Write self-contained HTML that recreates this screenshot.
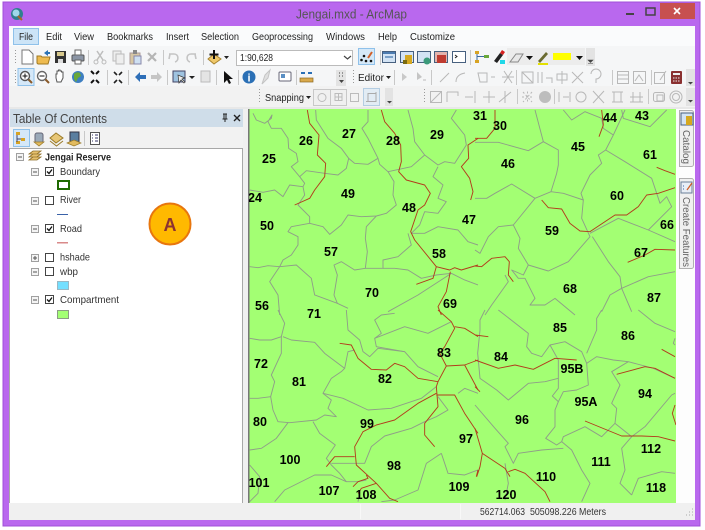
<!DOCTYPE html>
<html><head><meta charset="utf-8"><title>Jengai.mxd - ArcMap</title>
<style>
html,body{margin:0;padding:0;background:#fff;width:705px;height:530px;overflow:hidden}
svg{display:block;font-family:"Liberation Sans",sans-serif;filter:blur(.3px)}
.m{font-size:10.500px;fill:#222}
.g polyline{fill:none;stroke:#8f9e88;stroke-width:2.800;stroke-linejoin:round}
.r polyline{fill:none;stroke:#b23c1c;stroke-width:2.800;stroke-linejoin:round}
.l text{font-size:12.500px;font-weight:bold;fill:#000;text-anchor:middle}
.t{font-size:10.500px;fill:#333}
.d{fill:none;stroke:#b8b8b8;stroke-width:1}
.sep{stroke:#c8c8c8;stroke-width:1}
</style></head><body>
<svg width="705" height="530" viewBox="0 0 705 530">
<defs><clipPath id="mc"><rect x="249" y="109" width="427" height="393"/></clipPath></defs>
<rect x="3" y="2" width="697" height="524" fill="#b968ee" stroke="#a050d8"/>
<circle cx="17" cy="14" r="6" fill="#2f7f8f"/><circle cx="16" cy="13" r="3.500" fill="#9fd8ea"/><path d="M18 16l4 4" stroke="#a5682a" stroke-width="2"/>
<text x="296" y="18.500" font-size="13" fill="#555" textLength="111" lengthAdjust="spacingAndGlyphs">Jengai.mxd - ArcMap</text>
<rect x="626" y="13" width="8" height="2" fill="#444"/>
<rect x="646" y="8" width="9" height="7" fill="none" stroke="#444" stroke-width="1.500"/>
<rect x="660" y="3" width="35" height="16" fill="#c75050"/>
<path d="M674 8l6 6M680 8l-6 6" stroke="#fff" stroke-width="1.600"/>

<rect x="9" y="26" width="686" height="494" fill="#f5f6f7"/>
<rect x="9" y="26" width="686" height="20" fill="#fafbfc"/>
<rect x="9" y="86" width="686" height="23" fill="#f2f2f2"/>
<!-- menu -->
<rect x="13.500" y="28.500" width="25" height="16" fill="#cce4f7" stroke="#8fc1ea"/>
<text class="m" x="19" y="40" textLength="14" lengthAdjust="spacingAndGlyphs">File</text>
<text class="m" x="46" y="40" textLength="16" lengthAdjust="spacingAndGlyphs">Edit</text>
<text class="m" x="74" y="40" textLength="20" lengthAdjust="spacingAndGlyphs">View</text>
<text class="m" x="107" y="40" textLength="46" lengthAdjust="spacingAndGlyphs">Bookmarks</text>
<text class="m" x="166" y="40" textLength="23" lengthAdjust="spacingAndGlyphs">Insert</text>
<text class="m" x="201" y="40" textLength="38" lengthAdjust="spacingAndGlyphs">Selection</text>
<text class="m" x="252" y="40" textLength="61" lengthAdjust="spacingAndGlyphs">Geoprocessing</text>
<text class="m" x="326" y="40" textLength="39" lengthAdjust="spacingAndGlyphs">Windows</text>
<text class="m" x="378" y="40" textLength="19" lengthAdjust="spacingAndGlyphs">Help</text>
<text class="m" x="410" y="40" textLength="45" lengthAdjust="spacingAndGlyphs">Customize</text>

<!-- row 1 -->
<path d="M15.500 50v15M15.500 70v14" stroke="#999" stroke-width="1" stroke-dasharray="1 2"/>
<path d="M22 50h7l4 4v10H22z" fill="#fff" stroke="#777"/>
<path d="M37 63v-7h4l1 1h8l-2 7H38z" fill="#eebb50" stroke="#a07820"/><path d="M44 53l4-3v2h2v2h-2v2z" fill="#2a72b5"/>
<rect x="55" y="51" width="11" height="12" fill="#333"/><rect x="57" y="52" width="7" height="4" fill="#d8c98c"/><rect x="58" y="59" width="5" height="4" fill="#ddd"/>
<rect x="72" y="55" width="12" height="6" rx="1" fill="#8b95a5" stroke="#555"/><rect x="75" y="50" width="6" height="5" fill="#fff" stroke="#666"/><rect x="75" y="60" width="6" height="4" fill="#fff" stroke="#666"/>
<line class="sep" x1="88.500" y1="50" x2="88.500" y2="65"/>
<path d="M97 51l6 9M103 51l-6 9" stroke="#bdbdbd" stroke-width="1.500"/><circle cx="96" cy="62" r="2" fill="none" stroke="#bbb"/><circle cx="104" cy="62" r="2" fill="none" stroke="#bbb"/>
<rect x="113" y="51" width="8" height="10" fill="#eee" stroke="#bbb"/><rect x="116" y="54" width="8" height="10" fill="#eee" stroke="#bbb"/>
<rect x="130" y="53" width="10" height="11" fill="#d7c7a4" stroke="#a99"/><rect x="134" y="56" width="7" height="8" fill="#cfe0f2" stroke="#88a"/><rect x="133" y="50" width="4" height="4" fill="#888"/>
<path d="M148 53l8 8M156 53l-8 8" stroke="#b5b5b5" stroke-width="2.200"/>
<line class="sep" x1="163.500" y1="50" x2="163.500" y2="65"/>
<path d="M170 54l-1 5M169 54h5c5 0 5 7 1 8" fill="none" stroke="#c4c4c4" stroke-width="1.600"/>
<path d="M195 54l1 5M196 54h-5c-5 0-5 7-1 8" fill="none" stroke="#c4c4c4" stroke-width="1.600"/>
<line class="sep" x1="203.500" y1="50" x2="203.500" y2="65"/>
<path d="M208 59l6-5 7 5-7 5z" fill="#efc86a" stroke="#a88430"/><path d="M214 50v9M209.500 54.500h9" stroke="#111" stroke-width="2"/>
<path d="M224 56h5l-2.500 3z" fill="#222"/>
<rect x="236.500" y="50.500" width="116" height="15" fill="#fff" stroke="#bbb"/>
<text x="240" y="61" font-size="10.500" fill="#222" textLength="33" lengthAdjust="spacingAndGlyphs">1:90,628</text>
<path d="M344 56l3.500 3 3.500-3" fill="none" stroke="#444" stroke-width="1.200"/>
<rect x="358.500" y="48.500" width="16" height="16" fill="#d5e8f8" stroke="#8fc1ea"/>
<path d="M368 58l4-6" stroke="#d0602a" stroke-width="2"/><circle cx="361.500" cy="60" r="1.300" fill="#111"/><circle cx="366" cy="61" r="1.300" fill="#111"/><circle cx="371" cy="61" r="1.300" fill="#111"/><circle cx="364" cy="56" r="1.300" fill="#111"/>
<line class="sep" x1="380.500" y1="50" x2="380.500" y2="65"/>
<rect x="382.500" y="51.500" width="13" height="11" fill="#d3e3f4" stroke="#47607f"/><rect x="383" y="52" width="12" height="2" fill="#4d7cb0"/><rect x="385" y="56" width="8" height="2" fill="#7aa0c8"/>
<rect x="400.500" y="51.500" width="13" height="11" fill="#d3e3f4" stroke="#47607f"/><rect x="405" y="55" width="7" height="9" fill="#d6a81f"/><rect x="403" y="60" width="4" height="4" fill="#7a6a10"/>
<rect x="417.500" y="51.500" width="13" height="11" fill="#d3e3f4" stroke="#47607f"/><circle cx="427" cy="61" r="3.500" fill="#3b9a7a"/>
<rect x="434.500" y="51.500" width="13" height="11" fill="#e3b3ad" stroke="#47607f"/><rect x="437" y="55" width="9" height="8" fill="#bf3b30"/>
<rect x="452.500" y="51.500" width="13" height="11" fill="#fff" stroke="#47607f"/><path d="M455 55l2 1.500-2 1.500" stroke="#222" fill="none"/>
<line class="sep" x1="470.500" y1="50" x2="470.500" y2="65"/>
<rect x="475" y="51" width="4" height="3" fill="#d7a323"/><rect x="475" y="60" width="4" height="3" fill="#d7a323"/><rect x="484" y="55" width="5" height="3" fill="#6aa83a"/><path d="M477 54v6M477 56.500h7" stroke="#3a6aa0"/>
<path d="M494 61l6-8 3 2-6 8z" fill="#222"/><path d="M500 53l2-3 3 2-2 3z" fill="#d52020"/><rect x="500" y="60" width="5" height="4" fill="#20d8e8"/>
<rect x="507" y="48" width="78" height="17" fill="#ececec"/>
<path d="M510 62l6-8h7l-5 8z" fill="#e8e8e8" stroke="#888"/>
<path d="M526 56h7l-3.500 4z" fill="#111"/>
<path d="M538 61l8-9 2 2-8 9z" fill="#6a6a30"/><rect x="538" y="63" width="10" height="2" fill="#e3e000"/>
<rect x="553" y="53" width="18" height="7" fill="#ffff00"/>
<path d="M576 56h7l-3.500 4z" fill="#111"/>
<rect x="586" y="48" width="9" height="18" fill="#e3e3e3"/><path d="M588 60h5l-2.500 2.500zM588 63.500h5" fill="#444" stroke="#444" stroke-width=".6"/>

<!-- row 2 -->
<rect x="18" y="68.500" width="16" height="17" fill="#d5e8f8" stroke="#8fc1ea"/>
<circle cx="25" cy="76" r="4.500" fill="#fff" stroke="#555" stroke-width="1.400"/><path d="M22.500 76h5M25 73.500v5" stroke="#111"/><path d="M28.500 79.500l3.500 3.500" stroke="#8a5a2a" stroke-width="2"/>
<circle cx="42" cy="76" r="4.500" fill="#fff" stroke="#666" stroke-width="1.400"/><path d="M39.500 76h5" stroke="#111"/><path d="M45.500 79.500l3.500 3.500" stroke="#8a5a2a" stroke-width="2"/>
<path d="M56 78v-4l1 0v-3h1.500v-1h1.500v1h1.500v1h1.500v6l-2 4h-4z" fill="#fff" stroke="#555"/>
<circle cx="78" cy="77" r="6" fill="#3e7fc1"/><path d="M74 74c2-2 4-2 6-1l1 3-3 2-2 4-2-3z" fill="#6aa83a"/>
<path d="M91 71l3 3M99 71l-3 3M91 83l3-3M99 83l-3-3" stroke="#111" stroke-width="2"/>
<line class="sep" x1="107.500" y1="70" x2="107.500" y2="85"/>
<path d="M114 72l3 3M122 72l-3 3M114 83l3-3M122 83l-3-3" stroke="#222" stroke-width="1.600"/>
<line class="sep" x1="128.500" y1="70" x2="128.500" y2="85"/>
<path d="M135 77l5-5v3h6v4h-6v3z" fill="#2e6fb8"/>
<path d="M162 77l-5-5v3h-6v4h6v3z" fill="#c5c5c5"/>
<line class="sep" x1="167.500" y1="70" x2="167.500" y2="85"/>
<rect x="173" y="71" width="12" height="11" fill="#9fc3e0" stroke="#446"/><path d="M178 75l1 8 2-3 3 3 1-1-3-3 3-1z" fill="#eee" stroke="#333" stroke-width=".7"/>
<path d="M189 76h6l-3 3z" fill="#222"/>
<rect x="201" y="71" width="9" height="11" fill="#e4e4e4" stroke="#bbb"/>
<line class="sep" x1="216.500" y1="70" x2="216.500" y2="85"/>
<path d="M224 71v12l3-3 2 4 2-1-2-4h4z" fill="#111"/>
<line class="sep" x1="238.500" y1="70" x2="238.500" y2="85"/>
<circle cx="249" cy="77" r="6.500" fill="#2a6fb5"/><text x="249" y="81.500" font-size="11" font-weight="bold" fill="#fff" text-anchor="middle">i</text>
<path d="M262 84l3-9 5-5-2 8z" fill="#e0e0e0" stroke="#c4c4c4"/>
<rect x="279" y="72" width="12" height="9" rx="1" fill="#fff" stroke="#667"/><rect x="281" y="74" width="4" height="4" fill="#5a8fc4"/>
<line class="sep" x1="296.500" y1="70" x2="296.500" y2="85"/>
<path d="M301 73h4M308 73h4" stroke="#2a6fb5" stroke-width="2"/><rect x="300" y="78" width="13" height="4" fill="#d9a94c" stroke="#8b6a22" stroke-width=".7"/>
<rect x="336" y="70" width="10" height="16" fill="#e3e3e3"/><path d="M339 73h1M342 73h1M339 76h1M342 76h1" stroke="#444"/><path d="M339 80h5l-2.500 3z" fill="#444"/>
<path d="M353.500 70v15" stroke="#999" stroke-dasharray="1 2"/>
<text class="m" x="358" y="81" textLength="26" lengthAdjust="spacingAndGlyphs">Editor</text><path d="M386 76h5l-2.500 3z" fill="#222"/>
<line class="sep" x1="394.500" y1="70" x2="394.500" y2="85"/>
<path d="M402 73l5 4-5 4z" fill="#c9c9c9"/><path d="M417 72l5 5-5 3z" fill="#c4c4c4"/><path d="M423 80h3" stroke="#bbb"/>
<line class="sep" x1="431.500" y1="70" x2="431.500" y2="85"/>
<g class="d"><path d="M440 82l9-9M456 82c0-5 3-8 9-9"/><path d="M478 73h9v9h-7zM491 77h4"/><path d="M504 71l8 12M512 71l-8 12M502 77h12"/></g>
<line class="sep" x1="516.500" y1="70" x2="516.500" y2="85"/>
<g class="d"><path d="M522 72h11v11h-11zM522 72l11 11"/><path d="M538 72v11M542 72v11M546 78h6v5"/><path d="M557 74h10v6h-10zM562 71v13"/><path d="M572 72l11 11M583 72l-11 11"/><path d="M591 74a5 5 0 1 1 5 5v4"/></g>
<line class="sep" x1="612.500" y1="70" x2="612.500" y2="85"/>
<g class="d"><rect x="617.500" y="71.500" width="11" height="12"/><path d="M617 75h12M617 79h12"/><rect x="633.500" y="71.500" width="12" height="12"/><path d="M635 81l4-6 4 6"/></g>
<line class="sep" x1="651.500" y1="70" x2="651.500" y2="85"/>
<g class="d"><rect x="654.500" y="72.500" width="10" height="11"/><path d="M660 80l6-9"/></g>
<rect x="671" y="71" width="11" height="13" rx="1" fill="#8a3030"/><rect x="673" y="73" width="7" height="2" fill="#eee"/><path d="M673 78h7M673 81h7" stroke="#eee" stroke-dasharray="1.500 1"/>
<rect x="686" y="69" width="9" height="17" fill="#e3e3e3"/><path d="M688 82h5l-2.500 2.500z" fill="#444"/>

<!-- row 3 -->
<path d="M259.500 89v15" stroke="#999" stroke-dasharray="1 2"/>
<text class="m" x="265" y="101" textLength="39" lengthAdjust="spacingAndGlyphs">Snapping</text><path d="M306 96h5l-2.500 3z" fill="#222"/>
<rect x="313.500" y="89.500" width="17" height="16" fill="#f0f0f0" stroke="#c8c8c8"/><circle cx="322" cy="97.500" r="4" fill="none" stroke="#bbb"/>
<rect x="330.500" y="89.500" width="16" height="16" fill="#f0f0f0" stroke="#c8c8c8"/><path d="M335 93.500h7v7h-7zM338.500 93.500v7M335 97h7" fill="none" stroke="#bbb"/>
<rect x="350.500" y="93.500" width="8" height="8" fill="none" stroke="#bbb"/>
<rect x="363.500" y="88.500" width="16" height="17" fill="#e2ecf4" stroke="#b4cde2"/><path d="M368 93.500h8v8h-8zM366 101.500h4M376 92v3" fill="none" stroke="#aaa"/>
<rect x="385" y="88" width="8" height="18" fill="#e3e3e3"/><path d="M387 101h5l-2.500 2.500z" fill="#444"/>
<path d="M424.500 89v15" stroke="#999" stroke-dasharray="1 2"/>
<g class="d"><rect x="430.500" y="91.500" width="11" height="11"/><path d="M431 102l10-10"/><path d="M447 92h11v4M447 92v10"/><path d="M465 97h8M475 91v12"/><path d="M483 97h12M489 91v12"/><path d="M499 102l12-10M505 91v12"/></g>
<line class="sep" x1="517.500" y1="89" x2="517.500" y2="104"/>
<path d="M522 97h11M527.500 91.500v11M523 92l9 10M532 92l-9 10" class="d" stroke-dasharray="2 2"/>
<circle cx="545" cy="97" r="6" fill="#bdbdbd"/>
<line class="sep" x1="554.500" y1="89" x2="554.500" y2="104"/>
<g class="d"><path d="M559 92v10M563 97h6M570 92v10"/><circle cx="581" cy="97" r="5"/><path d="M593 91l11 12M604 91l-11 12"/><path d="M612 92h11M612 102h11M614 92v10M621 92v10"/><path d="M630 102h13M633 92v10M640 92v10M630 97h13"/></g>
<line class="sep" x1="648.500" y1="89" x2="648.500" y2="104"/>
<g class="d"><rect x="653.500" y="92.500" width="11" height="9" rx="2"/><rect x="657" y="95" width="6" height="6"/><circle cx="676" cy="97" r="6"/><circle cx="676" cy="97" r="3.500"/></g>
<rect x="686" y="88" width="9" height="18" fill="#e3e3e3"/><path d="M688 100h5l-2.500 2.500z" fill="#444"/>

<rect x="9" y="107" width="686" height="2" fill="#e8e8e8"/>
<rect x="9" y="109" width="240" height="394" fill="#f0f0f0"/>
<!-- TOC -->
<rect x="10" y="109" width="233" height="18" fill="#cfdde9"/>
<text x="13" y="123" font-size="13" fill="#444" textLength="94" lengthAdjust="spacingAndGlyphs">Table Of Contents</text>
<path d="M223 114h4M224 114v5h2v-5M222.500 119h5M225 119v3" fill="none" stroke="#222" stroke-width="1"/>
<path d="M234 115l6 6M240 115l-6 6" stroke="#222" stroke-width="1.400"/>
<rect x="10" y="127" width="233" height="21" fill="#f2f2f2"/>
<rect x="13.500" y="129.500" width="16" height="17" fill="#d5e8f8" stroke="#8fc1ea"/>
<rect x="16" y="132" width="4" height="3" fill="#d7a323"/><rect x="21" y="138" width="4" height="3" fill="#d7a323"/><rect x="16" y="141" width="4" height="3" fill="#d7a323"/><path d="M17 135v7M17 139h4" stroke="#446"/>
<rect x="35" y="133" width="8" height="10" rx="2" fill="#9aa9b8" stroke="#667"/><path d="M34 142l5 4 5-4-1 0h-8z" fill="#e2bb60" stroke="#9a7a28" stroke-width=".7"/>
<path d="M50 138l6-5 7 5-7 5z" fill="#e7c676" stroke="#9a7a28"/><path d="M50 141l6.500 5 6.500-5" fill="none" stroke="#9a7a28"/>
<rect x="70" y="132" width="9" height="10" fill="#5a7ea0" stroke="#334"/><path d="M67 143l7-3 7 3-7 3z" fill="#e2bb60" stroke="#9a7a28" stroke-width=".7"/>
<line class="sep" x1="84.500" y1="131" x2="84.500" y2="146"/>
<rect x="90.500" y="132.500" width="9" height="12" fill="#fff" stroke="#555"/><path d="M92 135h1M95 135h3M92 138h1M95 138h3M92 141h1M95 141h3" stroke="#336"/>
<rect x="9.500" y="148.500" width="233" height="355" fill="#fff" stroke="#a8a8a8"/>

<!-- TOC tree -->
<g fill="#f4f4f4" stroke="#a0a0a0">
<rect x="16.500" y="153.500" width="7" height="7"/><rect x="31.500" y="168.500" width="7" height="7"/><rect x="31.500" y="197.500" width="7" height="7"/><rect x="31.500" y="225.500" width="7" height="7"/><rect x="31.500" y="254.500" width="7" height="7"/><rect x="31.500" y="268.500" width="7" height="7"/><rect x="31.500" y="296.500" width="7" height="7"/>
</g>
<path d="M18 157h4M33 172h4M33 201h4M33 229h4M33 258h4M35 256v4M33 272h4M33 300h4" stroke="#555" fill="none"/>
<g fill="#fff" stroke="#444">
<rect x="45.500" y="167.500" width="8" height="8"/><rect x="45.500" y="196.500" width="8" height="8"/><rect x="45.500" y="224.500" width="8" height="8"/><rect x="45.500" y="253.500" width="8" height="8"/><rect x="45.500" y="267.500" width="8" height="8"/><rect x="45.500" y="295.500" width="8" height="8"/>
</g>
<path d="M47 171.500l2 2 3-4M47 228.500l2 2 3-4M47 299.500l2 2 3-4" fill="none" stroke="#111" stroke-width="1.300"/>
<path d="M29 154l4-3h8l-4 3zM29 157l4-3h8l-4 3zM29 160l4-3h8l-4 3z" fill="#e6c06e" stroke="#8f6f28" stroke-width=".8"/>
<text x="45" y="160.500" font-size="10.500" font-weight="bold" fill="#222" textLength="66" lengthAdjust="spacingAndGlyphs">Jengai Reserve</text>
<text class="t" x="60" y="175" textLength="40" lengthAdjust="spacingAndGlyphs">Boundary</text>
<rect x="58" y="181" width="11" height="8" fill="#fff" stroke="#1e6a00" stroke-width="2"/>
<text class="t" x="60" y="203" textLength="21" lengthAdjust="spacingAndGlyphs">River</text>
<rect x="57" y="214" width="11" height="1" fill="#3a62a8"/>
<text class="t" x="60" y="232" textLength="22" lengthAdjust="spacingAndGlyphs">Road</text>
<rect x="57" y="242" width="11" height="1.500" fill="#d98a8a"/>
<text class="t" x="60" y="260.500" textLength="30" lengthAdjust="spacingAndGlyphs">hshade</text>
<text class="t" x="60" y="275" textLength="18" lengthAdjust="spacingAndGlyphs">wbp</text>
<rect x="57.500" y="281.500" width="11" height="8" fill="#73dfff" stroke="#9ab8c4"/>
<text class="t" x="60" y="303" textLength="59" lengthAdjust="spacingAndGlyphs">Compartment</text>
<rect x="57.500" y="310.500" width="11" height="8" fill="#a3ff73" stroke="#8c9c84"/>
<circle cx="170" cy="224" r="20.500" fill="#ffb900" stroke="#e8760e" stroke-width="2"/>
<text x="170" y="231" font-size="18" font-weight="bold" fill="#8c3232" text-anchor="middle">A</text>

<!-- map -->
<rect x="248" y="109" width="428" height="394" fill="#a3ff73"/>
<rect x="248" y="109" width="1.500" height="394" fill="#777"/>
<g clip-path="url(#mc)">
<g transform="translate(248,105) scale(.33333)">
<g class="g">
<polyline points="15,25 25,45 50,55 70,40 72,30 60,50 70,70 100,70 120,100 122,130 145,145 150,170 130,185 155,215 170,235 165,245 125,240 105,275 80,255 45,262 5,255"/>
<polyline points="155,215 175,197 230,205 270,210 295,190 302,160 280,130 240,100 205,45 203,15"/>
<polyline points="302,160 320,175 360,178 390,160 360,100 342,70 360,50 360,15"/>
<polyline points="390,160 395,178 420,200 438,230 435,270 445,300 415,325 385,333 340,335 300,330 280,360 245,388 225,365 185,355 130,365 120,380 150,395 150,420 130,450 105,465 95,485 60,482 30,488 5,485"/>
<polyline points="165,245 170,270 150,300 185,335 185,355"/>
<polyline points="385,333 355,365 352,400 358,440 352,490 405,490 405,465 450,455 490,420 480,385"/>
<polyline points="352,490 320,495 280,470 258,480 268,510 258,570 268,595 300,610"/>
<polyline points="405,490 440,490 480,495 520,520 565,510 610,505 650,525 690,540"/>
<polyline points="420,200 490,185 530,150 570,180 590,170 620,175 655,120"/>
<polyline points="570,185 555,215 585,240 570,280 595,290 570,325 530,320 515,360 490,385 530,385 570,365 630,375 660,410 690,420"/>
<polyline points="480,15 495,70 500,110 530,150"/>
<polyline points="95,485 65,530 90,570 95,630"/>
<polyline points="95,485 145,480 190,520 200,570 268,595"/>
<polyline points="610,505 510,570 420,620"/>
<polyline points="625,15 610,40 650,90 655,120"/>
</g>
<g class="r">
<polyline points="178,15 185,55 213,90 208,150 233,175 230,215 200,255 185,280 140,300"/>
<polyline points="400,15 410,50 440,85 458,120 460,170 452,200 475,225 530,240 547,265 530,300 510,315 488,380 500,405 565,485 605,495 620,488 640,495 690,480"/>
<polyline points="565,485 555,520 505,538"/>
<polyline points="607,500 595,560 570,605 580,630"/>
<polyline points="690,100 660,120 662,160 640,185 665,220 675,260 668,285"/>
</g>
</g>
<g transform="translate(475,105) scale(.33333)">
<g class="g">
<polyline points="0,112 70,112 160,137 205,110 250,135 250,180 245,205 228,260 180,280 115,360 135,400 130,430 160,480 220,498 280,470 345,395 320,340 325,285 265,265 228,260"/>
<polyline points="180,15 205,110"/>
<polyline points="265,15 290,45 330,20 380,40 385,70 415,90 392,135 370,150 380,175 345,210 318,265 325,285"/>
<polyline points="392,135 450,170 530,220 555,295 575,275 590,305 520,375"/>
<polyline points="440,15 445,40 525,65 575,15"/>
<polyline points="450,15 415,90"/>
<polyline points="345,385 430,340 520,375 600,410"/>
<polyline points="0,280 35,280 60,265 110,237 180,280"/>
<polyline points="115,360 70,365 40,395 15,445 0,435"/>
<polyline points="352,395 400,470 435,515 440,550 520,515 600,500"/>
<polyline points="440,550 405,570 380,620"/>
<polyline points="440,550 470,620"/>
<polyline points="160,480 145,510 110,495 130,520 150,520 180,580 165,600 210,600 240,580 300,630"/>
<polyline points="90,510 100,530 50,600 30,630"/>
</g>
<g class="r">
<polyline points="0,100 35,100 60,70 60,15"/>
<polyline points="380,15 385,60 372,95"/>
<polyline points="545,187 570,197 600,208"/>
<polyline points="600,248 550,265 515,270 490,305 455,330 420,330 345,380 315,378 285,355 260,312 220,308 200,285"/>
<polyline points="600,435 540,433 510,450 458,472"/>
<polyline points="0,483 20,485 50,460 90,455 103,470 100,510 115,530"/>
</g>
</g>
<g transform="translate(248,310) scale(.33333)">
<g class="g">
<polyline points="90,0 110,40 100,80 70,90 35,90 5,85"/>
<polyline points="105,80 130,90 200,97 230,130 290,175 280,185 250,205 225,250 250,270 240,295 265,320 230,315 205,330 125,338 90,335 75,300 68,260 80,215 70,195 100,130 100,80"/>
<polyline points="68,260 30,265 5,265"/>
<polyline points="120,338 85,385 40,415 5,420"/>
<polyline points="195,335 215,370 262,405 235,445 250,465 275,490 295,515 330,515 355,510"/>
<polyline points="295,0 300,60 335,90 345,125 365,140 390,115 470,125 510,170 570,200"/>
<polyline points="225,250 285,265 360,300 430,295 520,265 565,230"/>
<polyline points="290,175 300,125 320,120"/>
<polyline points="440,10 400,15 380,30 400,70 380,85 385,110 470,125"/>
<polyline points="380,85 470,50 540,70 610,35"/>
<polyline points="250,460 350,460 370,410 410,378 490,355 530,335 565,320 600,300 570,260"/>
<polyline points="580,430 535,460 510,540 440,570 400,575"/>
<polyline points="580,430 600,490 650,495 690,480"/>
<polyline points="5,465 35,500 30,550 5,575"/>
<polyline points="80,575 110,540 200,495 250,495 295,515"/>
<polyline points="335,550 330,575"/>
<polyline points="630,250 650,235 690,250"/>
</g>
<g class="r">
<polyline points="275,100 310,105 330,145 370,178 415,180 440,160 470,170 510,205 570,215 565,230 570,290 530,340 530,375 560,410"/>
<polyline points="570,0 610,35 620,55 590,110 575,130 595,168 570,215"/>
<polyline points="620,50 650,55 690,80"/>
<polyline points="595,168 650,165 690,150"/>
<polyline points="565,255 620,255 650,310 690,370"/>
<polyline points="565,250 510,280 440,330 385,345 345,365 320,410 325,465 385,520 425,565 450,575"/>
<polyline points="320,440 260,440 235,470"/>
<polyline points="355,495 360,505 330,515 315,530"/>
<polyline points="385,520 340,535 330,550"/>
<polyline points="650,165 690,240"/>
<polyline points="690,480 685,500"/>
</g>
</g>
<g transform="translate(475,310) scale(.33333)">
<g class="g">
<polyline points="70,0 160,70 155,110 170,130 200,140 225,105 270,95 320,125 335,160 365,140 415,150 460,155 535,175 600,205"/>
<polyline points="380,0 365,25 365,60 335,130"/>
<polyline points="225,105 250,150 250,205 210,215 160,220 100,270 65,240 15,205 8,130 15,60 15,30 30,0"/>
<polyline points="335,160 340,225 305,240 265,245 250,275 232,258 250,235 250,205"/>
<polyline points="250,275 240,300 240,350 212,385 245,405 260,395 265,380 330,350 380,380 420,340 470,380 510,350 590,255 600,250"/>
<polyline points="460,155 410,185 435,225 410,280 425,295 420,340"/>
<polyline points="260,395 290,420 320,480 345,520 320,575"/>
<polyline points="265,415 200,420 130,430 115,460 90,410 100,400 60,355 0,285"/>
<polyline points="470,380 440,415 450,480 435,520 470,555"/>
<polyline points="470,555 490,505 560,485 600,490"/>
<polyline points="90,460 100,520 90,570"/>
<polyline points="490,0 540,40 600,65"/>
<polyline points="600,85 595,100 600,105"/>
</g>
<g class="r">
<polyline points="0,150 70,175 120,165 175,178 240,145 305,150"/>
<polyline points="0,75 40,80"/>
<polyline points="560,118 600,140"/>
<polyline points="425,193 510,170 540,175 600,205"/>
<polyline points="330,333 440,378 500,378 550,380 600,393"/>
<polyline points="600,285 592,310 603,345"/>
<polyline points="0,355 22,430 15,470 5,500"/>
<polyline points="22,430 90,475 105,500"/>
<polyline points="100,485 120,478 150,490 210,545 225,575"/>
<polyline points="0,230 15,245"/>
</g>
</g>
<g class="l">
<text x="480" y="120">31</text><text x="500" y="130">30</text><text x="610" y="122">44</text><text x="642" y="120">43</text>
<text x="306" y="145">26</text><text x="349" y="138">27</text><text x="393" y="145">28</text><text x="437" y="139">29</text>
<text x="269" y="163">25</text><text x="508" y="168">46</text><text x="578" y="151">45</text><text x="650" y="159">61</text>
<text x="255" y="202">24</text><text x="348" y="198">49</text><text x="617" y="200">60</text><text x="409" y="212">48</text>
<text x="469" y="224">47</text><text x="552" y="235">59</text><text x="267" y="230">50</text><text x="667" y="229">66</text>
<text x="641" y="257">67</text><text x="439" y="258">58</text><text x="331" y="256">57</text><text x="372" y="297">70</text>
<text x="570" y="293">68</text><text x="654" y="302">87</text><text x="450" y="308">69</text><text x="262" y="310">56</text>
<text x="314" y="318">71</text><text x="560" y="332">85</text><text x="628" y="340">86</text><text x="444" y="357">83</text>
<text x="501" y="361">84</text><text x="261" y="368">72</text><text x="572" y="373">95B</text><text x="299" y="386">81</text>
<text x="385" y="383">82</text><text x="645" y="398">94</text><text x="586" y="406">95A</text><text x="522" y="424">96</text>
<text x="260" y="426">80</text><text x="367" y="428">99</text><text x="466" y="443">97</text><text x="651" y="453">112</text>
<text x="290" y="464">100</text><text x="394" y="470">98</text><text x="601" y="466">111</text><text x="546" y="481">110</text>
<text x="459" y="491">109</text><text x="656" y="492">118</text><text x="259" y="487">101</text><text x="329" y="495">107</text>
<text x="366" y="499">108</text><text x="506" y="499">120</text>
</g>
</g>

<!-- right tabs -->
<rect x="676" y="109" width="19" height="394" fill="#fdfdfd"/>
<path d="M679.500 110.500h12a2 2 0 0 1 2 2v52a2 2 0 0 1-2 2h-12z" fill="#f0f0f0" stroke="#b0b0b0"/>
<path d="M679.500 178.500h12a2 2 0 0 1 2 2v86a2 2 0 0 1-2 2h-12z" fill="#f0f0f0" stroke="#b0b0b0"/>
<rect x="681" y="113" width="12" height="12" fill="#d3e3f4" stroke="#47607f"/><rect x="686" y="116" width="6" height="9" fill="#d6a81f"/>
<rect x="681" y="182" width="11" height="11" fill="#e8eef6" stroke="#6a7f98"/><path d="M683 186h1M683 189h1" stroke="#3a62a8"/><path d="M687 190l5-7" stroke="#d0602a" stroke-width="1.300"/>
<text transform="translate(683,130) rotate(90)" font-size="10.500" fill="#666" textLength="34" lengthAdjust="spacingAndGlyphs">Catalog</text>
<text transform="translate(683,197) rotate(90)" font-size="10.500" fill="#666" textLength="70" lengthAdjust="spacingAndGlyphs">Create Features</text>

<!-- status -->
<rect x="9" y="503" width="686" height="17" fill="#f0f0f0"/>
<line x1="360.500" y1="504" x2="360.500" y2="519" stroke="#f8f8f8"/><line x1="460.500" y1="504" x2="460.500" y2="519" stroke="#f8f8f8"/>
<text x="480" y="515" font-size="10.500" fill="#333" textLength="45" lengthAdjust="spacingAndGlyphs">562714.063</text>
<text x="530" y="515" font-size="10.500" fill="#333" textLength="76" lengthAdjust="spacingAndGlyphs">505098.226 Meters</text>
<path d="M692 509h1M689 512h1M692 512h1M686 515h1M689 515h1M692 515h1" stroke="#aaa"/>
</svg>
</body></html>
